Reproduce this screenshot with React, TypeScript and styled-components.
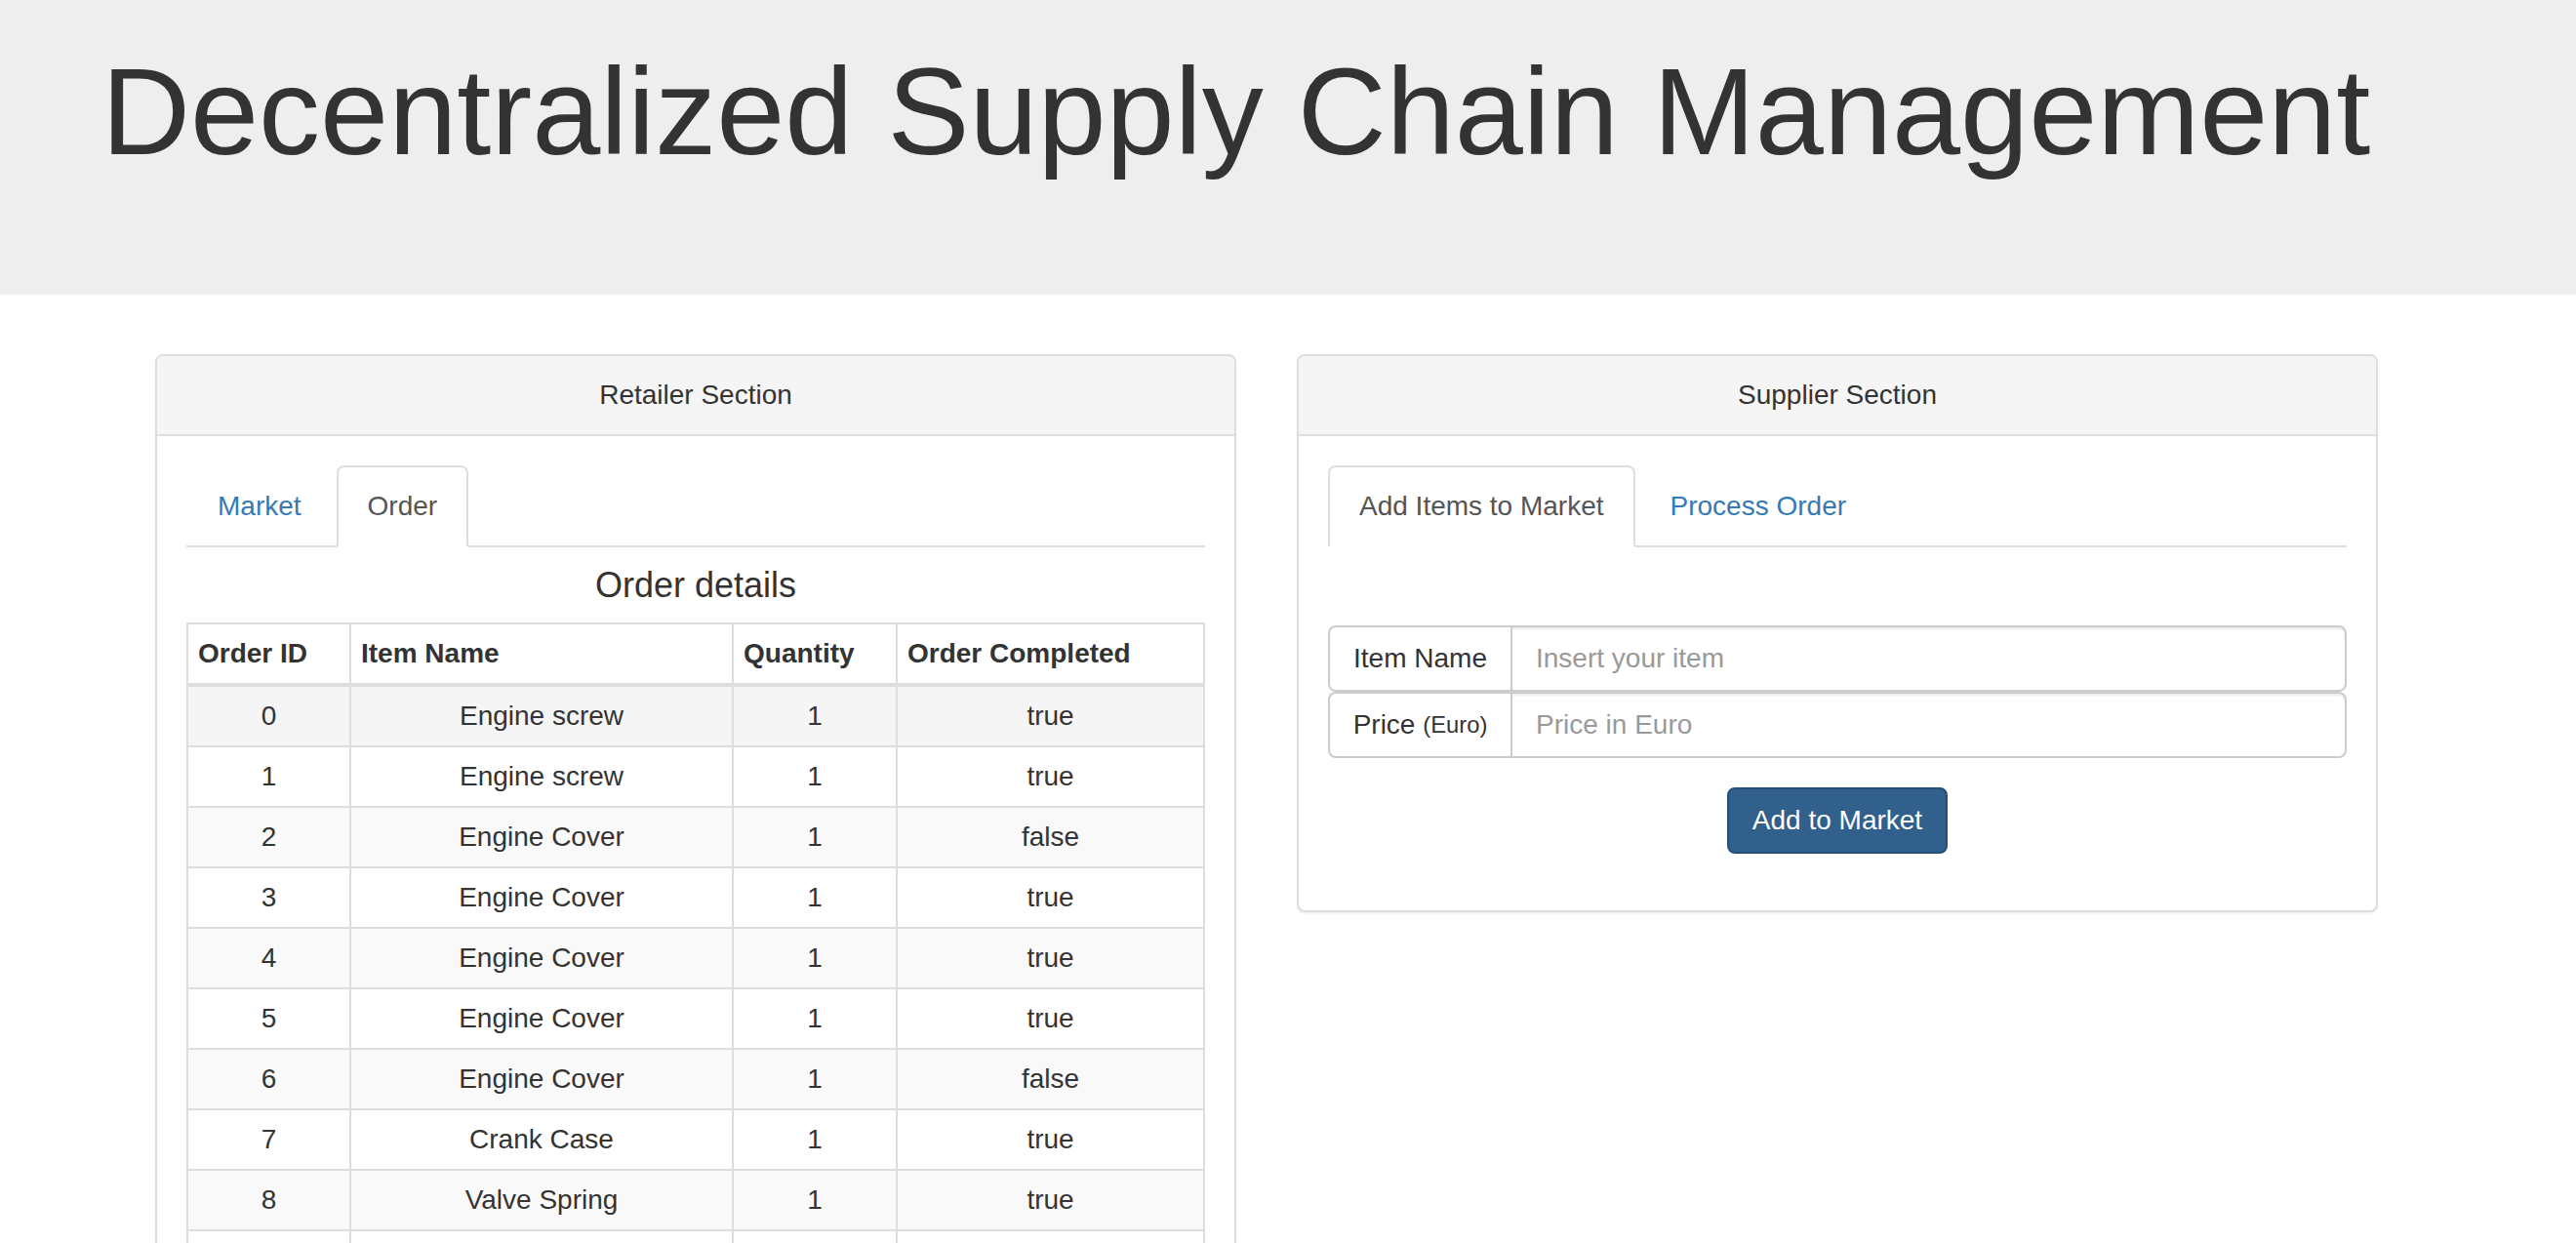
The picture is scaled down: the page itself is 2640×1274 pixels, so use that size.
import React from "react";
import styled, { createGlobalStyle, css } from "styled-components";

const GlobalStyle = createGlobalStyle`
  *, *::before, *::after { box-sizing: border-box; }
  html, body { margin: 0; padding: 0; background: #fff; }
  body {
    font-family: "Liberation Sans", Arial, Helvetica, sans-serif;
    font-size: 28px;
    line-height: 40px;
    color: #333;
  }
`;

const Jumbotron = styled.header`
  background: #eeeeee;
  height: 302px;
  padding: 46px 0 0 104px;
`;

const Title = styled.h1`
  margin: 0;
  font-size: 126px;
  font-weight: 400;
  line-height: 1.1;
  color: #333;
  white-space: nowrap;
`;

const Main = styled.main`
  display: flex;
  align-items: flex-start;
  gap: 62px;
  padding: 61px 0 0 159px;
`;

const Panel = styled.section`
  width: 1108px;
  flex: none;
  background: #fff;
  border: 2px solid #ddd;
  border-radius: 8px;
  box-shadow: 0 2px 2px rgba(0, 0, 0, 0.05);
`;

const PanelHeading = styled.div`
  background: #f5f5f5;
  border-bottom: 2px solid #ddd;
  border-radius: 6px 6px 0 0;
  padding: 20px 30px;
  text-align: center;
  color: #333;
`;

const PanelBody = styled.div`
  padding: 30px;
`;

const TabList = styled.ul`
  display: flex;
  list-style: none;
  margin: 0;
  padding: 0;
  border-bottom: 2px solid #ddd;
`;

const Tab = styled.li<{ $active?: boolean }>`
  margin: 0 4px -2px 0;
  padding: 20px 30px;
  line-height: 40px;
  border: 2px solid transparent;
  border-radius: 8px 8px 0 0;
  color: #337ab7;
  cursor: pointer;
  ${(p) =>
    p.$active &&
    css`
      color: #555;
      background: #fff;
      border-color: #ddd #ddd transparent #ddd;
      cursor: default;
    `}
`;

const SubHeading = styled.h4`
  margin: 19px 0 18px;
  font-size: 36px;
  font-weight: 400;
  line-height: 1.1;
  text-align: center;
  color: #333;
`;

const Table = styled.table`
  width: 100%;
  table-layout: fixed;
  border-collapse: collapse;
  border: 2px solid #ddd;
  margin-bottom: 40px;
`;

const HeadCell = styled.th<{ $w?: number }>`
  ${(p) => (p.$w ? `width: ${p.$w}px;` : "")}
  padding: 10px;
  line-height: 40px;
  text-align: left;
  vertical-align: bottom;
  font-weight: 700;
  border: 2px solid #ddd;
  border-bottom-width: 4px;
`;

const Row = styled.tr<{ $shade?: string }>`
  background: ${(p) => p.$shade || "#fff"};
`;

const Cell = styled.td`
  padding: 10px;
  line-height: 40px;
  text-align: center;
  border: 2px solid #ddd;
`;

const Form = styled.div`
  margin-top: 80px;
  padding-bottom: 28px;
  display: flex;
  flex-direction: column;
  align-items: center;
`;

const InputGroup = styled.div`
  display: flex;
  width: 100%;
  height: 68px;
`;

const Addon = styled.span`
  flex: none;
  width: 187px;
  display: flex;
  align-items: center;
  justify-content: center;
  padding: 12px 20px;
  border: 2px solid #ccc;
  border-right: 0;
  border-radius: 8px 0 0 8px;
  background: #fff;
  color: #333;
  white-space: nowrap;
`;

const Small = styled.small`
  font-size: 85%;
`;

const Input = styled.input`
  flex: 1;
  min-width: 0;
  height: 68px;
  padding: 12px 24px;
  font-family: "Liberation Sans", Arial, Helvetica, sans-serif;
  font-size: 28px;
  line-height: 40px;
  color: #555;
  border: 2px solid #ccc;
  border-radius: 0 8px 8px 0;
  box-shadow: inset 0 2px 2px rgba(0, 0, 0, 0.075);
  outline: none;
  &::placeholder { color: #999; }
`;

const PrimaryButton = styled.button`
  margin-top: 30px;
  padding: 12px 24px;
  font-family: "Liberation Sans", Arial, Helvetica, sans-serif;
  font-size: 28px;
  line-height: 40px;
  color: #fff;
  background: #31608d;
  border: 2px solid #234f78;
  border-radius: 8px;
  cursor: pointer;
`;

type Order = { id: number; item: string; qty: number; done: boolean };

const orders: Order[] = [
  { id: 0, item: "Engine screw", qty: 1, done: true },
  { id: 1, item: "Engine screw", qty: 1, done: true },
  { id: 2, item: "Engine Cover", qty: 1, done: false },
  { id: 3, item: "Engine Cover", qty: 1, done: true },
  { id: 4, item: "Engine Cover", qty: 1, done: true },
  { id: 5, item: "Engine Cover", qty: 1, done: true },
  { id: 6, item: "Engine Cover", qty: 1, done: false },
  { id: 7, item: "Crank Case", qty: 1, done: true },
  { id: 8, item: "Valve Spring", qty: 1, done: true },
  { id: 9, item: "Valve Spring", qty: 1, done: false },
];

const shadeFor = (i: number) => (i === 0 ? "#f5f5f5" : i % 2 === 0 ? "#f9f9f9" : "#fff");

export default function App() {
  return (
    <>
      <GlobalStyle />
      <Jumbotron>
        <Title>Decentralized Supply Chain Management</Title>
      </Jumbotron>
      <Main>
        <Panel>
          <PanelHeading>Retailer Section</PanelHeading>
          <PanelBody>
            <TabList>
              <Tab>Market</Tab>
              <Tab $active>Order</Tab>
            </TabList>
            <SubHeading>Order details</SubHeading>
            <Table>
              <thead>
                <tr>
                  <HeadCell $w={167}>Order ID</HeadCell>
                  <HeadCell $w={392}>Item Name</HeadCell>
                  <HeadCell $w={168}>Quantity</HeadCell>
                  <HeadCell>Order Completed</HeadCell>
                </tr>
              </thead>
              <tbody>
                {orders.map((o, i) => (
                  <Row key={o.id} $shade={shadeFor(i)}>
                    <Cell>{o.id}</Cell>
                    <Cell>{o.item}</Cell>
                    <Cell>{o.qty}</Cell>
                    <Cell>{String(o.done)}</Cell>
                  </Row>
                ))}
              </tbody>
            </Table>
          </PanelBody>
        </Panel>
        <Panel>
          <PanelHeading>Supplier Section</PanelHeading>
          <PanelBody>
            <TabList>
              <Tab $active>Add Items to Market</Tab>
              <Tab>Process Order</Tab>
            </TabList>
            <Form>
              <InputGroup>
                <Addon>Item Name</Addon>
                <Input type="text" placeholder="Insert your item" />
              </InputGroup>
              <InputGroup>
                <Addon>
                  Price&nbsp;<Small>(Euro)</Small>
                </Addon>
                <Input type="text" placeholder="Price in Euro" />
              </InputGroup>
              <PrimaryButton type="button">Add to Market</PrimaryButton>
            </Form>
          </PanelBody>
        </Panel>
      </Main>
    </>
  );
}
